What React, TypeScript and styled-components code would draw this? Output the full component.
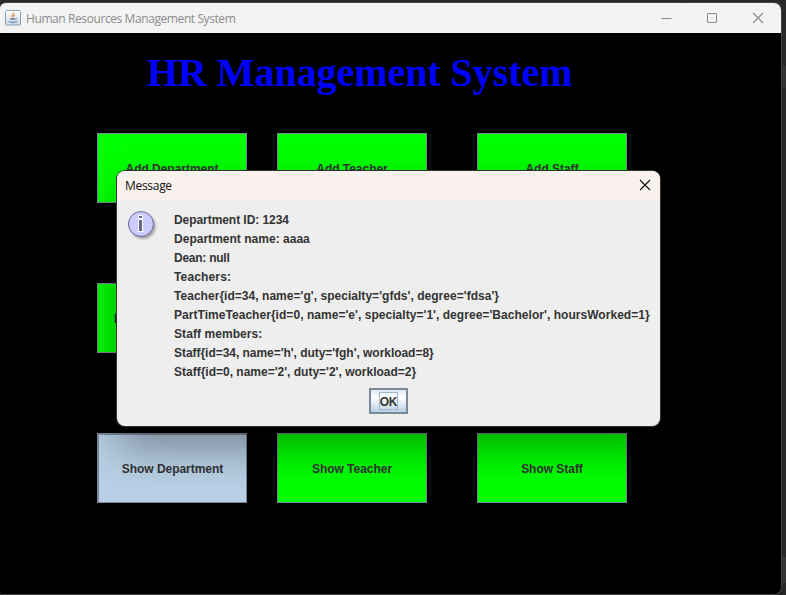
import React from 'react';
import styled, { createGlobalStyle, css } from 'styled-components';

const GlobalStyle = createGlobalStyle`
  * { box-sizing: border-box; }
  html, body { margin: 0; height: 100%; overflow: hidden; background: #2b2a29; }
`;

const Desktop = styled.div`
  width: 786px;
  height: 595px;
  padding-top: 2px;
  background:
    linear-gradient(#3a3a3a, #3a3a3a) 682px 0 / 1px 2px no-repeat,
    linear-gradient(#333333, #333333) 782px 66px / 4px 22px no-repeat,
    linear-gradient(#353535, #353535) 782px 557px / 4px 26px no-repeat,
    #292827;
  overflow: hidden;
`;

const Window = styled.main`
  position: relative;
  display: flex;
  flex-direction: column;
  width: 782px;
  height: 593px;
  border: 1px solid #434343;
  border-left: 0;
  border-radius: 6px 8px 8px 3px;
  background: #000;
  overflow: hidden;
`;

const TitleBar = styled.header`
  flex: none;
  display: flex;
  align-items: center;
  height: 30px;
  padding: 0 17px 0 5px;
  background: #f3f3f3;
  color: #8b8b8b;
`;

const WindowTitle = styled.span`
  margin: 1px 0 0 5px;
  font: 12px/16px 'Open Sans', sans-serif;
  letter-spacing: -0.41px;
  white-space: nowrap;
`;

const WindowControls = styled.div`
  display: flex;
  gap: 34px;
  margin-left: auto;
  margin-top: -1px;
`;

const Content = styled.section`
  flex: 1;
`;

const Heading = styled.h1`
  margin: 16px 0 0 147px;
  height: 84px;
  font: bold 40px/48px 'Liberation Serif', serif;
  letter-spacing: -0.06px;
  color: #00f;
  white-space: nowrap;
`;

const ButtonGrid = styled.div`
  display: grid;
  grid-template-columns: 180px 200px 150px;
  grid-template-rows: repeat(3, 70px);
  row-gap: 80px;
  margin-left: 97px;
`;

const MenuButton = styled.button<{ $row: number; $column: number; $pressed?: boolean }>`
  grid-row: ${p => p.$row};
  grid-column: ${p => p.$column};
  width: 150px;
  height: 70px;
  padding: 2px 0 0;
  border: 1px solid #7a8a99;
  border-radius: 0;
  background: #0f0;
  color: #333;
  font: bold 12px/16px 'Liberation Sans', Arial, sans-serif;
  letter-spacing: -0.03px;
  ${p => p.$pressed && css`
    background: #b8cfe5;
    border-width: 2px 1px 1px 2px;
    padding: 1px 0 0;
  `}
`;

const Dialog = styled.section`
  position: absolute;
  left: 117px;
  top: 168px;
  width: 543px;
  height: 255px;
  border-radius: 8px;
  background: #eee;
  box-shadow: 0 0 0 1px #343434, 0 21px 44px 0 rgba(0, 0, 0, 0.37);
  overflow: hidden;
`;

const DialogBar = styled.header`
  display: flex;
  align-items: center;
  justify-content: space-between;
  height: 30px;
  padding: 0 9px 0 8px;
  background: #f9f1ed;
  color: #111;
  font: 12px/16px 'Open Sans', sans-serif;
  letter-spacing: -0.3px;

  svg { margin-top: -2px; }
`;

const DialogBody = styled.div`
  display: flex;
  padding: 9px 0 0 10px;
`;

const Message = styled.div`
  margin: 1px 0 0 15px;
  color: #333;
  font: bold 12px/19px 'Liberation Sans', Arial, sans-serif;
  white-space: nowrap;
`;

const MessageLine = styled.div<{ $spacing?: number }>`
  height: 19px;
  letter-spacing: ${p => p.$spacing ?? 0}px;
`;

const OkButton = styled.button`
  display: block;
  width: 39px;
  height: 26px;
  margin: 6px 0 0 252px;
  padding: 2px 8px;
  border: 2px solid #7a8a99;
  background: linear-gradient(#dde8f3, #fff 35%, #b8cfe5);
  color: #333;
  font: bold 12px/18px 'Liberation Sans', Arial, sans-serif;
  letter-spacing: -0.2px;
`;

const FocusFrame = styled.span`
  display: flex;
  justify-content: center;
  width: 19px;
  height: 18px;
  border: 1px solid #a3b8cc;
`;

const JavaIcon = () => (
  <svg width="16" height="16" viewBox="0 0 16 16">
    <defs>
      <linearGradient id="tile" x2="0" y2="1">
        <stop stopColor="#fff" />
        <stop offset="1" stopColor="#cbd9e3" />
      </linearGradient>
    </defs>
    <rect x=".5" y=".5" width="15" height="14.5" rx="1" fill="url(#tile)" stroke="#8ba0b3" />
    <path d="M7.6 7.2C5.2 5.4 9.6 4.6 8.2 2.4M8.9 7c-.9-1 .2-1.8 1-2.4" fill="none" stroke="#e99a5c" strokeWidth="1.3" />
    <path d="M4.8 8h5.6c0 2.6-5 2.8-5.6 0z" fill="#6f91ad" />
    <path d="M10.4 8.2c2-.4 1.5 1.5-.6 1.8" fill="none" stroke="#6e8eaa" strokeWidth=".7" />
    <path d="M3.6 11.4c1.5 1.3 7.2 1.3 8.6 0" fill="none" stroke="#6585a3" strokeWidth="1.2" />
  </svg>
);

const InfoIcon = () => (
  <svg width="32" height="32" viewBox="0 0 32 32">
    <defs>
      <filter id="iconShadow" x="-30%" y="-30%" width="160%" height="160%">
        <feGaussianBlur stdDeviation="1.3" />
      </filter>
    </defs>
    <circle cx="16" cy="16.5" r="12.5" fill="#888" opacity=".75" filter="url(#iconShadow)" />
    <circle cx="14" cy="14" r="12.5" fill="#ccccff" stroke="#666699" />
    <path d="M11.5 5.5h4v3h-4zM11.5 9.5h4v11h1v1h-6v-1h1z" fill="#666699" stroke="#fff" />
  </svg>
);

const MinimizeIcon = () => (
  <svg width="11" height="12" viewBox="0 0 11 12"><path d="M.5 6.5h10" stroke="#8b8b8b" /></svg>
);

const MaximizeIcon = () => (
  <svg width="12" height="12" viewBox="0 0 12 12" fill="none" stroke="#8b8b8b">
    <rect x="1.5" y="1.5" width="9" height="9" rx=".4" />
  </svg>
);

const CloseIcon = ({ color }: { color: string }) => (
  <svg width="12" height="12" viewBox="0 0 12 12">
    <path d="M1 1l10 10M11 1L1 11" stroke={color} strokeWidth="1.1" />
  </svg>
);

const actions = [
  { label: 'Add Department', row: 1, column: 1 },
  { label: 'Add Teacher', row: 1, column: 2 },
  { label: 'Add Staff', row: 1, column: 3 },
  { label: 'Remove Department', row: 2, column: 1 },
  { label: 'Show Department', row: 3, column: 1, pressed: true },
  { label: 'Show Teacher', row: 3, column: 2 },
  { label: 'Show Staff', row: 3, column: 3 },
];

const lines: { text: string; spacing?: number }[] = [
  { text: 'Department ID: 1234', spacing: -0.06 },
  { text: 'Department name: aaaa', spacing: 0.02 },
  { text: 'Dean: null', spacing: -0.25 },
  { text: 'Teachers:', spacing: 0.15 },
  { text: "Teacher{id=34, name='g', specialty='gfds', degree='fdsa'}", spacing: 0.035 },
  { text: "PartTimeTeacher{id=0, name='e', specialty='1', degree='Bachelor', hoursWorked=1}", spacing: 0.042 },
  { text: 'Staff members:', spacing: 0.07 },
  { text: "Staff{id=34, name='h', duty='fgh', workload=8}", spacing: -0.04 },
  { text: "Staff{id=0, name='2', duty='2', workload=2}" },
];

export default function App() {
  return (
    <>
      <GlobalStyle />
      <Desktop>
        <Window>
          <TitleBar>
            <JavaIcon />
            <WindowTitle>Human Resources Management System</WindowTitle>
            <WindowControls>
              <MinimizeIcon />
              <MaximizeIcon />
              <CloseIcon color="#8b8b8b" />
            </WindowControls>
          </TitleBar>
          <Content>
            <Heading>HR Management System</Heading>
            <ButtonGrid>
              {actions.map(a => (
                <MenuButton key={a.label} $row={a.row} $column={a.column} $pressed={a.pressed}>
                  {a.label}
                </MenuButton>
              ))}
            </ButtonGrid>
          </Content>
          <Dialog role="dialog">
            <DialogBar>
              <span>Message</span>
              <CloseIcon color="#111" />
            </DialogBar>
            <DialogBody>
              <InfoIcon />
              <Message>
                {lines.map(l => (
                  <MessageLine key={l.text} $spacing={l.spacing}>{l.text}</MessageLine>
                ))}
              </Message>
            </DialogBody>
            <OkButton><FocusFrame>OK</FocusFrame></OkButton>
          </Dialog>
        </Window>
      </Desktop>
    </>
  );
}
